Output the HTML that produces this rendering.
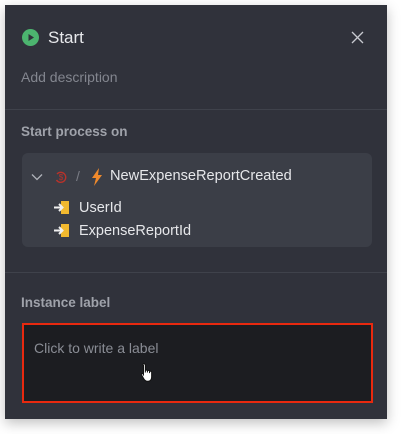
<!DOCTYPE html>
<html><head><meta charset="utf-8"><style>
*{margin:0;padding:0;box-sizing:border-box}
body{width:402px;height:434px;background:#fff;font-family:"Liberation Sans",sans-serif;position:relative;overflow:hidden}
.panel{position:absolute;left:5px;top:5px;width:382px;height:414px;background:#30323b;box-shadow:0 4px 12px rgba(0,0,0,.25)}
.abs{position:absolute;white-space:nowrap}
.hr{position:absolute;left:5px;width:382px;height:1px;background:#3f424b}
.card{position:absolute;left:22px;top:153px;width:350px;height:94px;background:#3b3e47;border-radius:6px}
.input{position:absolute;left:22px;top:323px;width:351px;height:80px;background:#1c1d21;border:2px solid #e8290f}
</style></head><body>
<div class="panel"></div>
<svg class="abs" style="left:22px;top:29px" width="17" height="17" viewBox="0 0 17 17"><circle cx="8.5" cy="8.5" r="8.5" fill="#4cb46f"/><path d="M6.5 5l5.5 3.5-5.5 3.5z" fill="#30323b"/></svg>
<div class="abs" style="left:48px;top:28px;font-size:17px;color:#e8e9ec">Start</div>
<svg class="abs" style="left:351px;top:31px" width="13" height="13" viewBox="0 0 13 13"><path d="M1 1l11 11M12 1L1 12" stroke="#c8cad0" stroke-width="1.3"/></svg>
<div class="abs" style="left:21px;top:69px;font-size:14px;color:#83868f">Add description</div>
<div class="hr" style="top:109px"></div>
<div class="abs" style="left:21px;top:124px;font-size:13.5px;font-weight:bold;color:#9fa2aa">Start process on</div>
<div class="card"></div>
<svg class="abs" style="left:31px;top:173px" width="12" height="8" viewBox="0 0 12 8"><path d="M1 1.5l5 5 5-5" stroke="#b0b3ba" stroke-width="1.3" fill="none"/></svg>
<svg class="abs" style="left:54px;top:170px" width="14" height="14" viewBox="0 0 14 14"><path d="M3 4a5 5 0 1 1 -0.5 6" stroke="#b8322a" stroke-width="1.4" fill="none"/><text x="7" y="10" font-size="8" fill="#b8322a" text-anchor="middle" font-family="Liberation Sans">$</text></svg>
<div class="abs" style="left:76px;top:168px;font-size:14px;color:#7a7d86">/</div>
<svg class="abs" style="left:91px;top:168px" width="12" height="18" viewBox="0 0 12 18"><path d="M8 0L1 10h4l-2 8 8-11H7z" fill="#f08a2c"/></svg>
<div class="abs" style="left:110px;top:168px;font-size:14.6px;color:#e6e7ea">NewExpenseReportCreated</div>
<svg class="abs" style="left:54px;top:200px" width="16" height="15" viewBox="0 0 16 15"><rect x="7" y="1" width="8" height="13" fill="#f2b92f"/><path d="M0 7.5h8M5 4l3.5 3.5L5 11" stroke="#f0f0f0" stroke-width="2" fill="none"/></svg>
<div class="abs" style="left:79px;top:200px;font-size:14.5px;color:#e6e7ea">UserId</div>
<svg class="abs" style="left:54px;top:223px" width="16" height="15" viewBox="0 0 16 15"><rect x="7" y="1" width="8" height="13" fill="#f2b92f"/><path d="M0 7.5h8M5 4l3.5 3.5L5 11" stroke="#f0f0f0" stroke-width="2" fill="none"/></svg>
<div class="abs" style="left:79px;top:223px;font-size:14.5px;color:#e6e7ea">ExpenseReportId</div>
<div class="hr" style="top:272px"></div>
<div class="abs" style="left:21px;top:295px;font-size:13.5px;font-weight:bold;color:#9fa2aa">Instance label</div>
<div class="input"></div>
<div class="abs" style="left:34px;top:340px;font-size:14px;color:#8a8d95">Click to write a label</div>
<svg class="abs" style="left:140px;top:362px" width="17" height="21" viewBox="0 0 14 18"><path d="M3 1.5c.8 0 1.3.5 1.3 1.3V9V7.5c0-.8 1.8-.8 1.8 0V9V7.8c0-.8 1.8-.8 1.8 0V9.5V8.5c0-.8 1.8-.8 1.8 0V13c0 2-1.2 3.5-3 3.5H6c-1.5 0-2.3-.8-3-2L1 11c-.4-.8.6-1.6 1.3-.8l.4.6V2.8C1.7 2 2.2 1.5 3 1.5z" fill="#fff" stroke="#111" stroke-width="0.9"/></svg>
</body></html>
